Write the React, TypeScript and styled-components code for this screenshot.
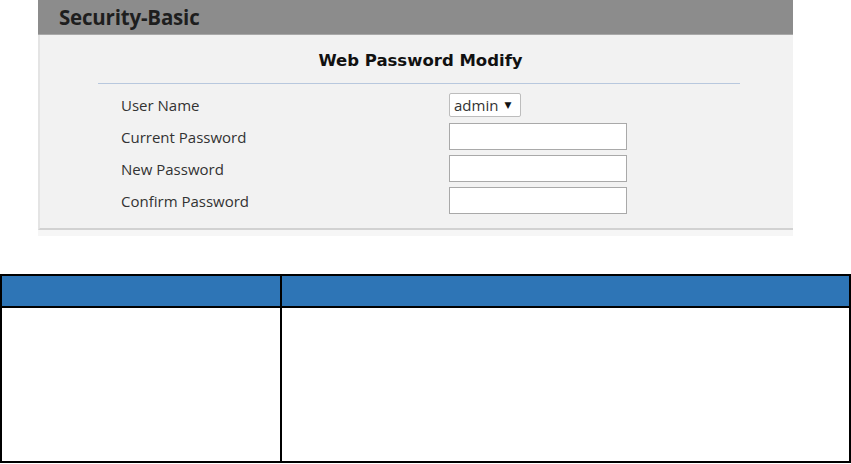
import React from 'react';
import styled, { createGlobalStyle } from 'styled-components';

const GRAY_HEADER = '#8c8c8c';
const PANEL_BG = '#f2f2f2';
const TEXT = '#333333';
const TABLE_BLUE = '#2e75b6';

const fields = [
  { id: 'user', label: 'User Name', kind: 'select' },
  { id: 'current', label: 'Current Password', kind: 'input' },
  { id: 'new', label: 'New Password', kind: 'input' },
  { id: 'confirm', label: 'Confirm Password', kind: 'input' },
];

const GlobalStyle = createGlobalStyle`
  html, body {
    margin: 0;
    padding: 0;
    background: #ffffff;
  }
  body {
    font-family: 'Open Sans', 'Liberation Sans', sans-serif;
  }
`;

const App = () => {
  return (
    <Page>
      <GlobalStyle />
      <Shot>
        <TitleBar>Security-Basic</TitleBar>
        <Panel>
          <SectionTitle>Web Password Modify</SectionTitle>
          <Divider />
          <Form>
            {fields.map(({ id, label, kind }) => (
              <Row key={id}>
                <Label>{label}</Label>
                {kind === 'select' ? (
                  <Select>
                    admin <Arrow>▼</Arrow>
                  </Select>
                ) : (
                  <Input type="password" />
                )}
              </Row>
            ))}
          </Form>
        </Panel>
        <Shadow />
      </Shot>
      <Table>
        <thead>
          <tr>
            <HeadCell $width={278} />
            <HeadCell />
          </tr>
        </thead>
        <tbody>
          <tr>
            <BodyCell />
            <BodyCell />
          </tr>
        </tbody>
      </Table>
    </Page>
  );
};

export default App;

const Page = styled.div`
  width: 851px;
  height: 464px;
  display: flex;
  flex-direction: column;
`;

const Shot = styled.div`
  margin-left: 38px;
  width: 755px;
  height: 236px;
  display: flex;
  flex-direction: column;
`;

const TitleBar = styled.div`
  height: 34px;
  background: ${GRAY_HEADER};
  border-bottom: 1px solid #a9a9a9;
  padding-left: 21px;
  display: flex;
  align-items: center;
  font-family: 'Open Sans', 'Liberation Sans', sans-serif;
  font-weight: 700;
  font-size: 20.5px;
  color: #1e1e1e;
  letter-spacing: -0.2px;
`;

const Panel = styled.div`
  height: 195px;
  background: ${PANEL_BG};
  border-left: 2px solid #e4e4e4;
  border-bottom: 2px solid #d2d2d2;
  box-sizing: border-box;
  display: flex;
  flex-direction: column;
`;

const Shadow = styled.div`
  height: 6px;
  background: #f6f6f6;
`;

const SectionTitle = styled.div`
  margin-top: 15px;
  text-align: center;
  font-family: 'DejaVu Sans', 'Open Sans', sans-serif;
  font-weight: 700;
  font-size: 16.5px;
  color: #111111;
  line-height: 22px;
  padding-left: 8px;
`;

const Divider = styled.div`
  margin: 11px 0 0 58px;
  width: 642px;
  height: 1px;
  background: #b8c8de;
`;

const Form = styled.div`
  margin-top: 9px;
  padding-left: 81px;
  display: flex;
  flex-direction: column;
  gap: 5px;
`;

const Row = styled.div`
  display: grid;
  grid-template-columns: 328px auto;
  align-items: center;
  height: 27px;
  &:first-child {
    height: 24px;
    margin-bottom: 1px;
  }
`;

const Label = styled.span`
  font-size: 15px;
  color: ${TEXT};
`;

const Select = styled.div`
  width: 72px;
  height: 24px;
  box-sizing: border-box;
  background: #ffffff;
  border: 1px solid #bdbdbd;
  border-radius: 2px;
  display: flex;
  align-items: center;
  gap: 6px;
  padding-left: 4px;
  font-size: 15px;
  color: ${TEXT};
`;

const Arrow = styled.span`
  font-size: 9px;
  color: #111111;
  font-family: 'DejaVu Sans', sans-serif;
`;

const Input = styled.input`
  width: 178px;
  height: 27px;
  box-sizing: border-box;
  margin: 0;
  border: 1px solid #a9a9a9;
  background: #ffffff;
  outline: none;
`;

const Table = styled.table`
  margin-top: 38px;
  width: 851px;
  border-collapse: collapse;
  table-layout: fixed;
`;

const HeadCell = styled.th<{ $width?: number }>`
  width: ${({ $width }) => ($width ? `${$width}px` : 'auto')};
  height: 30px;
  padding: 0;
  background: ${TABLE_BLUE};
  border: 2px solid #000000;
`;

const BodyCell = styled.td`
  height: 153px;
  padding: 0;
  border: 2px solid #000000;
`;
